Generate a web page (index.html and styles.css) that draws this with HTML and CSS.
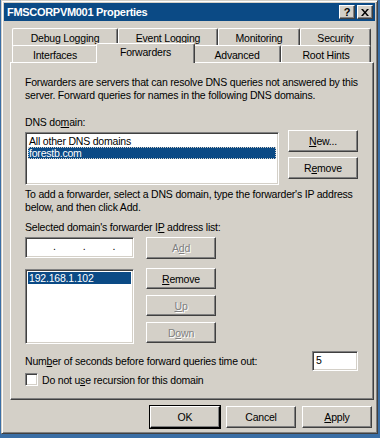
FILE: index.html
```html
<!DOCTYPE html>
<html lang="en">

<head>
    <meta charset="UTF-8">
    <title>FMSCORPVM001 Properties</title>
    <link rel="stylesheet" href="styles.css">
</head>

<body>
    <div class="window">
        <div class="titlebar">
            <span class="title">FMSCORPVM001 Properties</span>
            <div class="caption-buttons">
                <span class="cap-btn">?</span>
                <span class="cap-btn close">
                    <svg width="8" height="7" viewBox="0 0 8 7">
                        <path d="M0 0h2l2 2.5 2-2.5h2l-3 3.5 3 3.5h-2l-2-2.5-2 2.5h-2l3-3.5z" fill="#000" />
                    </svg>
                </span>
            </div>
        </div>

        <div class="dialog">
            <div class="tabs">
                <div class="tab-row back">
                    <div class="tab w-debug">Debug Logging</div>
                    <div class="tab w-event">Event Logging</div>
                    <div class="tab w-monitor">Monitoring</div>
                    <div class="tab w-security">Security</div>
                </div>
                <div class="tab-row front">
                    <div class="tab w-interfaces">Interfaces</div>
                    <div class="tab w-forwarders active">Forwarders</div>
                    <div class="tab w-advanced">Advanced</div>
                    <div class="tab w-roothints">Root Hints</div>
                </div>
            </div>

            <div class="panel">
                <p class="intro">Forwarders are servers that can resolve DNS queries not answered by this<br>server. Forward queries for names in the following DNS domains.</p>

                <div class="label domain-label">DNS do<u>m</u>ain:</div>
                <div class="row">
                    <div class="listbox domains">
                        <div class="item">All other DNS domains</div>
                        <div class="item selected">forestb.com</div>
                    </div>
                    <div class="btn-col">
                        <button class="btn"><u>N</u>ew...</button>
                        <button class="btn">R<u>e</u>move</button>
                    </div>
                </div>

                <p class="help">To add a forwarder, select a DNS domain, type the forwarder's IP address<br>below, and then click Add.</p>

                <div class="label ip-label">Selected domain's forwarder I<u>P</u> address list:</div>
                <div class="row ip-row">
                    <div class="ipbox">
                        <span>.</span><span>.</span><span>.</span>
                    </div>
                    <button class="btn disabled">A<u>d</u>d</button>
                </div>

                <div class="row list-row">
                    <div class="listbox ips">
                        <div class="item selected">192.168.1.102</div>
                    </div>
                    <div class="btn-col narrow">
                        <button class="btn"><u>R</u>emove</button>
                        <button class="btn disabled"><u>U</u>p</button>
                        <button class="btn disabled">D<u>o</u>wn</button>
                    </div>
                </div>

                <div class="row timeout-row">
                    <span class="label">Num<u>b</u>er of seconds before forward queries time out:</span>
                    <div class="field timeout">5</div>
                </div>

                <label class="check-row">
                    <span class="checkbox"></span>
                    <span>Do not u<u>s</u>e recursion for this domain</span>
                </label>
            </div>

            <div class="footer">
                <button class="btn default">OK</button>
                <button class="btn">Cancel</button>
                <button class="btn"><u>A</u>pply</button>
            </div>
        </div>
    </div>
</body>

</html>
```

FILE: styles.css
```css
body {
    margin: 0;
    background-color: #3a6ea5;
    font-family: 'Liberation Sans', Arial, sans-serif;
    font-size: 10.5px;
    letter-spacing: -0.2px;
    color: #000;
}

.window {
    width: 377px;
    height: 434px;
    margin-left: 1px;
    box-sizing: border-box;
    background-color: #d4d0c8;
    border-top: 1px solid #d4d0c8;
    border-left: 1px solid #d4d0c8;
    border-right: 1px solid #404040;
    border-bottom: 1px solid #404040;
    box-shadow: inset 1px 1px 0 #fff, inset -1px -1px 0 #808080;
    padding: 2px;
}

.titlebar {
    height: 18px;
    background-color: #0b4a85;
    display: flex;
    align-items: center;
    justify-content: space-between;
    padding-left: 3px;
}

.title {
    color: #fff;
    font-weight: bold;
    font-size: 11px;
    letter-spacing: -0.3px;
}

.caption-buttons {
    display: flex;
    gap: 2px;
    margin-right: 2px;
}

.cap-btn {
    width: 16px;
    height: 14px;
    box-sizing: border-box;
    background-color: #d4d0c8;
    border-top: 1px solid #fff;
    border-left: 1px solid #fff;
    border-right: 1px solid #404040;
    border-bottom: 1px solid #404040;
    box-shadow: inset -1px -1px 0 #808080;
    display: flex;
    align-items: center;
    justify-content: center;
    font-weight: bold;
    font-size: 11px;
    letter-spacing: 0;
    line-height: 1;
}

.dialog {
    padding: 7px 3px 0 6px;
}

/* tabs */

.tabs {
    margin-left: 2px;
    width: 359px;
}

.tab-row {
    display: flex;
    height: 17px;
}

.tab {
    box-sizing: border-box;
    height: 17px;
    border-top: 1px solid #fff;
    border-left: 1px solid #fff;
    border-right: 1px solid #404040;
    box-shadow: inset -1px 0 0 #808080;
    border-radius: 2px 2px 0 0;
    text-align: center;
    line-height: 16px;
    padding-top: 1px;
}

.tab-row.back .tab {
    height: 18px;
}

.w-debug { width: 106px; }
.w-event { width: 100px; }
.w-monitor { width: 82px; }
.w-security { width: 71px; }
.w-interfaces { width: 86px; }
.w-forwarders { width: 95px; }
.w-advanced { width: 88px; }
.w-roothints { width: 90px; }

.tab.active {
    position: relative;
    z-index: 2;
    height: 20px;
    margin: -2px -2px -1px;
    width: 99px;
    background-color: #d4d0c8;
    padding-top: 0;
    line-height: 17px;
}

.panel {
    width: 364px;
    height: 338px;
    box-sizing: border-box;
    border-top: 1px solid #fff;
    border-left: 1px solid #fff;
    border-right: 1px solid #404040;
    border-bottom: 1px solid #404040;
    box-shadow: inset -1px -1px 0 #808080;
    padding: 13px 15px 0 14px;
    white-space: nowrap;
}

p {
    margin: 0;
    line-height: 13px;
}

.label {
    line-height: 13px;
}

.domain-label {
    margin-top: 14px;
}

.row {
    display: flex;
    align-items: flex-start;
}

.listbox {
    box-sizing: border-box;
    background-color: #fff;
    border-top: 1px solid #808080;
    border-left: 1px solid #808080;
    border-right: 1px solid #fff;
    border-bottom: 1px solid #fff;
    box-shadow: inset 1px 1px 0 #404040, inset -1px -1px 0 #d4d0c8;
    padding: 2px;
}

.domains {
    width: 255px;
    height: 53px;
    margin-top: 3px;
}

.item {
    height: 12px;
    line-height: 12px;
    padding-left: 1px;
}

.item.selected {
    background-color: #0b4a85;
    color: #fff;
}

.domains .item.selected {
    outline: 1px dotted #d4d0c8;
    outline-offset: -1px;
}

.btn-col {
    display: flex;
    flex-direction: column;
    gap: 5px;
    margin-left: 9px;
    margin-top: 1px;
}

.btn {
    width: 70px;
    height: 22px;
    box-sizing: border-box;
    background-color: #d4d0c8;
    border-top: 1px solid #fff;
    border-left: 1px solid #fff;
    border-right: 1px solid #404040;
    border-bottom: 1px solid #404040;
    box-shadow: inset -1px -1px 0 #808080;
    font-family: inherit;
    font-size: 10.5px;
    letter-spacing: -0.2px;
    color: #000;
    padding: 0;
}

.btn.disabled {
    color: #808080;
    text-shadow: 1px 1px 0 #fff;
}

.help {
    margin-top: 3px;
}

.ip-label {
    margin-top: 7px;
}

.ip-row {
    margin-top: 3px;
}

.ipbox {
    width: 109px;
    height: 21px;
    box-sizing: border-box;
    background-color: #fff;
    border-top: 1px solid #808080;
    border-left: 1px solid #808080;
    border-right: 1px solid #fff;
    border-bottom: 1px solid #fff;
    box-shadow: inset 1px 1px 0 #404040, inset -1px -1px 0 #d4d0c8;
    display: flex;
    gap: 27px;
    padding-left: 27px;
    line-height: 17px;
}

.ip-row .btn {
    margin-left: 12px;
}

.list-row {
    margin-top: 10px;
}

.ips {
    width: 109px;
    height: 75px;
}

.btn-col.narrow {
    margin-left: 12px;
    margin-top: -1px;
    gap: 6px;
}

.btn-col.narrow .btn {
    height: 21px;
}

.timeout-row {
    justify-content: space-between;
    align-items: center;
    margin-top: 7px;
}

.field {
    box-sizing: border-box;
    background-color: #fff;
    border-top: 1px solid #808080;
    border-left: 1px solid #808080;
    border-right: 1px solid #fff;
    border-bottom: 1px solid #fff;
    box-shadow: inset 1px 1px 0 #404040, inset -1px -1px 0 #d4d0c8;
}

.timeout {
    width: 46px;
    height: 20px;
    padding-left: 3px;
    line-height: 17px;
}

.check-row {
    display: flex;
    align-items: center;
    gap: 4px;
    margin-top: 2px;
}

.checkbox {
    width: 13px;
    height: 13px;
    box-sizing: border-box;
    background-color: #fff;
    border-top: 1px solid #808080;
    border-left: 1px solid #808080;
    border-right: 1px solid #fff;
    border-bottom: 1px solid #fff;
    box-shadow: inset 1px 1px 0 #404040, inset -1px -1px 0 #d4d0c8;
}

.footer {
    display: flex;
    justify-content: flex-end;
    gap: 6px;
    padding-top: 6px;
    width: 362px;
}

.btn.default {
    outline: 1px solid #000;
    outline-offset: 0;
    border-right-color: #000;
    border-bottom-color: #000;
}
```
